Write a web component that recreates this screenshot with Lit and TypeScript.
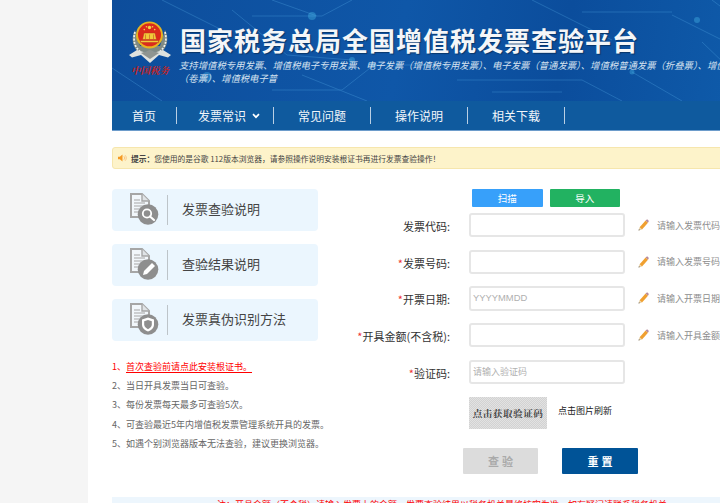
import { LitElement, html, css, svg } from "lit";
import { customElement } from "lit/decorators.js";

const docIcon = (glyph: unknown) => html`<svg class="doc" width="32" height="32" viewBox="0 0 32 32">
  <path d="M2 1H13L20 8V24H2Z" fill="#f2f7fb" stroke="#a6a6a6" stroke-width="2"/>
  <path d="M13 1V8H20" fill="#dfe3e6" stroke="#a6a6a6" stroke-width="1.4"/>
  <path d="M5 7H11M5 10H16M5 13H15M5 16H11M5 19H10" stroke="#a6a6a6" stroke-width="1.1"/>
  <circle cx="19" cy="21.5" r="10.3" fill="#8e8e8e"/>
  ${glyph}
</svg>`;

const searchG = svg`<circle cx="18" cy="20.5" r="4.2" fill="none" stroke="#fff" stroke-width="1.8"/><path d="M21 23.5L25 27" stroke="#fff" stroke-width="2.2" stroke-linecap="round"/>`;
const penG = svg`<path d="M14 27L15 23L23 15L26 18L18 26Z" fill="#fff"/>`;
const shieldG = svg`<path d="M19 14.5L25 16.5V21.5C25 25 22 27.5 19 28.5C16 27.5 13 25 13 21.5V16.5Z" fill="#fff"/><path d="M19 17L22.8 18.2V21.6C22.8 23.7 21 25.4 19 26.2C17 25.4 15.2 23.7 15.2 21.6V18.2Z" fill="#8e8e8e"/>`;

const pencil = html`<svg class="pencil" width="11" height="12" viewBox="0 0 11 12">
  <path d="M1.6 8.2L7.6 1.6L10 3.8L4 10.4Z" fill="#f0a030"/>
  <path d="M7.6 1.6L8.5.7C8.9.3 9.4.3 9.8.7L10.5 1.4C10.9 1.8 10.9 2.3 10.5 2.7L10 3.8Z" fill="#b98a9a"/>
  <path d="M1.6 8.2L.6 11.4L4 10.4Z" fill="#e9cfa0"/>
  <path d="M.6 11.4L.9 10.2L1.9 11.1Z" fill="#444"/>
</svg>`;

const emblem = html`<svg class="emblem" width="42" height="43" viewBox="0 0 42 43">
  <path d="M6 10C2 17 3 27 10 33L21 31L32 33C39 27 40 17 36 10L31 26H11Z" fill="#7f8a84"/>
  <path d="M6 12C4 19 5 27 11 31M36 12C38 19 37 27 31 31" fill="none" stroke="#eef1ee" stroke-width="1.7" stroke-dasharray="2 1.3"/>
  <path d="M8 30L0 35L3 37.5L12 35L21 43L30 35L39 37.5L42 35L34 30L21 34Z" fill="#dfe2de"/>
  <path d="M12 33L21 39L30 33L21 30Z" fill="#8f9591"/>
  <circle cx="20.5" cy="15" r="13.5" fill="#e6b422"/>
  <circle cx="20.5" cy="14.8" r="11.5" fill="#db2a1c"/>
  <circle cx="20.5" cy="7.5" r="1.7" fill="#f5d442"/>
  <circle cx="15.3" cy="9.6" r=".8" fill="#f5d442"/><circle cx="17.5" cy="6.8" r=".8" fill="#f5d442"/>
  <circle cx="25.7" cy="9.6" r=".8" fill="#f5d442"/><circle cx="23.5" cy="6.8" r=".8" fill="#f5d442"/>
  <path d="M13.5 19.5L15 13H26L27.5 19.5ZM11.5 20.5H29.5V22.5H11.5ZM16.5 14.5V19M20.5 14.5V19M24.5 14.5V19" fill="#f0c93a" stroke="#b9281c" stroke-width=".45"/>
</svg>`;

const banner = svg`<svg class="circuit" width="640" height="101" viewBox="0 0 640 101" preserveAspectRatio="none">
  <g fill="none" stroke="#5db4ee" stroke-width="1" opacity=".28">
    <path d="M50 0L110 30M140 16H210L240 0M160 0L205 16M120 10L175 55L240 60"/>
    <path d="M0 68L50 101M190 75L255 101M160 90H230L262 65H340"/>
    <path d="M345 80H470L510 101M380 92H450M520 72L570 101M590 42L640 90M560 15L640 55M600 0L640 30"/>
    <path d="M420 0L500 40M470 12H560"/>
  </g>
  <g fill="#4fc3f0" opacity=".35">
    <circle cx="200" cy="16" r="4"/><circle cx="240" cy="60" r="3"/><circle cx="262" cy="65" r="2.5"/>
    <circle cx="95" cy="77" r="5"/><circle cx="585" cy="20" r="3"/><circle cx="520" cy="72" r="2.5"/>
  </g>
</svg>`;

@customElement("app-root")
export class AppRoot extends LitElement {
  static styles = css`
    :host { display: block; width: 720px; height: 503px; overflow: hidden; background: #f5f5f5;
      font-family: "Liberation Sans", "Noto Sans CJK SC", sans-serif; }
    .page { margin-left: 88px; width: 632px; height: 503px; background: #fff; padding-left: 24px;
      box-sizing: border-box; overflow: hidden; }
    .content { width: 640px; }
    header { height: 130px; background: #0f5a9e; border-bottom: 1px solid #6d9ccb; }
    .banner { position: relative; height: 101px; display: flex; padding: 20px 0 0 17px; box-sizing: border-box;
      background: linear-gradient(100deg, #0d4d9b 0%, #0f57a8 45%, #0b4d9c 70%, #0f5cab 100%); overflow: hidden; }
    .circuit { position: absolute; left: 0; top: 0; }
    .logo { position: relative; display: flex; flex-direction: column; align-items: center; width: 42px; flex: none; }
    .emblem { display: block; }
    .seal { margin-top: 1px; font-size: 9.5px; line-height: 13px; font-weight: 700; font-style: italic;
      color: #c5231d; white-space: nowrap; font-family: "Noto Serif CJK SC", "Noto Sans CJK SC", serif; }
    .titles { position: relative; margin-left: 9px; padding-top: 3px; width: 590px; flex: none; }
    h1 { margin: 0; font-size: 26px; line-height: 33px; letter-spacing: 1px; font-weight: 700; color: #f4f6f8;
      white-space: nowrap; text-shadow: 1px 1px 1px rgba(0,0,0,.35); font-family: "Noto Sans CJK SC", sans-serif; }
    .sub { margin: 0 0 0 -1px; padding-top: 3px; font-size: 9.35px; line-height: 12.5px; font-style: italic; color: #d5e2f0;
      white-space: nowrap; font-family: "Noto Sans CJK SC", sans-serif; }
    nav { display: flex; height: 29px; align-items: center; background: #0f5a9e; color: #f2f6fa;
      font-size: 12px; font-family: "Noto Sans CJK SC", sans-serif; }
    nav a { flex: none; width: 97px; height: 17px; line-height: 17px; border-right: 1px solid #b9cfe4;
      box-sizing: border-box; display: flex; align-items: center; justify-content: center; gap: 6px; }
    nav a:first-child { width: 65px; }
    nav a.drop { padding-left: 8px; }
    .chev { display: block; }
    .notice { margin-top: 16px; height: 22px; display: flex; align-items: center; gap: 4px; padding-left: 5px;
      background: #fdf3ca; border: 1px solid #f6e6ad; border-radius: 3px; font-size: 7.75px; color: #444;
      box-sizing: border-box; white-space: nowrap; font-family: "Noto Sans CJK SC", sans-serif; }
    .notice b { font-weight: 700; }
    .body { display: flex; margin-top: 20px; }
    .left { width: 220px; flex: none; }
    .cards { display: flex; flex-direction: column; gap: 13px; width: 206px; }
    .card { height: 42px; display: flex; align-items: center; background: #ebf6fe; border-radius: 4px;
      padding-left: 17px; box-sizing: border-box; color: #444; font-size: 13px;
      font-family: "Noto Sans CJK SC", sans-serif; }
    .card span.t { margin-top: -3px; }
    .doc { flex: none; margin-top: -2px; }
    .divider { width: 1px; height: 30px; background: #bdc4c9; margin: 0 14px 0 6px; }
    ol { list-style: none; margin: 15.5px 0 0; padding: 0; font-size: 9px; line-height: 19.4px; color: #666;
      white-space: nowrap; font-family: "Noto Sans CJK SC", sans-serif; }
    .warn { color: #f00; }
    .warn u { text-decoration: underline; text-underline-offset: 2px; }
    .right { width: 408px; flex: none; }
    .tools { display: flex; gap: 7px; margin-left: 140px; margin-bottom: 6px; }
    .tool { width: 70.5px; height: 18px; line-height: 18px; text-align: center; color: #fff; font-size: 9.5px;
      border-radius: 1px; font-family: "Noto Sans CJK SC", sans-serif; }
    .blue { background: #37a0fa; }
    .green { background: #22b261; }
    .form { display: flex; flex-direction: column; gap: 12.5px; }
    .row { display: grid; grid-template-columns: 118px 156px auto; column-gap: 0; align-items: center; height: 24.2px; }
    .label { justify-self: end; margin-top: 2px; font-size: 11px; line-height: 16px; color: #333; white-space: nowrap; font-family: "Noto Sans CJK SC", sans-serif; }
    .label i { color: #e33; font-style: normal; }
    .input { grid-column: 2; margin-left: 19px; width: 156px; height: 24.2px; box-sizing: border-box; border: 2px solid #e6e6e6; border-radius: 3px;
      padding-left: 2px; line-height: 20px; font-size: 9px; color: #b0b0b0; white-space: nowrap;
      font-family: "Noto Sans CJK SC", sans-serif; background: #fff; }
    .input.date { font-family: "Liberation Sans", sans-serif; font-size: 9.4px; }
    .pencil { flex: none; }
    .hint { margin-left: 8px; font-size: 9px; color: #8d8d8d; white-space: nowrap; font-family: "Noto Sans CJK SC", sans-serif; }
    .hint-wrap { display: flex; align-items: center; margin-left: 32px; }
    .captcha { display: flex; align-items: center; margin: 13px 0 0 137px; gap: 11px; }
    .code { width: 78px; height: 32px; line-height: 32px; text-align: center; letter-spacing: .5px;
      background-color: #dcdcdc;
      background-image: repeating-conic-gradient(#d2d2d2 0 25%, #e2e2e2 0 50%);
      background-size: 2px 2px;
      font-family: "Noto Serif CJK SC", "Noto Sans CJK SC", serif; font-weight: 700; font-size: 9.6px; color: #444; white-space: nowrap; }
    .refresh { font-size: 9px; color: #222; font-family: "Noto Sans CJK SC", sans-serif; margin-top: -4px; }
    .actions { display: flex; gap: 24px; margin: 19px 0 0 131px; }
    .btn { width: 75px; height: 26px; line-height: 26px; text-align: center; text-indent: 3px; font-size: 11px; font-weight: 700;
      letter-spacing: 3px; border-radius: 1px; font-family: "Noto Sans CJK SC", sans-serif; }
    .btn.navy { width: 76px; }
    .gray { background: #dcdcdc; color: #aaa; }
    .navy { background: #005397; color: #fff; }
    .foot { margin-top: 23px; height: 10px; padding: 3px 0 0 105px; box-sizing: border-box; background: #edf6fd; color: #f00; font-size: 9px; line-height: 10px;
      white-space: nowrap; overflow: hidden; font-family: "Noto Sans CJK SC", sans-serif; }
  `;

  render() {
    const rows = [
      { l: "发票代码", req: false, hint: "请输入发票代码", ph: "" },
      { l: "发票号码", req: true, hint: "请输入发票号码", ph: "" },
      { l: "开票日期", req: true, hint: "请输入开票日期", ph: "YYYYMMDD" },
      { l: "开具金额(不含税)", req: true, hint: "请输入开具金额", ph: "" },
    ];
    return html`<div class="page"><div class="content">
      <header>
        <div class="banner">
          ${banner}
          <div class="logo">${emblem}<div class="seal">中国税务</div></div>
          <div class="titles">
            <h1>国家税务总局全国增值税发票查验平台</h1>
            <p class="sub">支持增值税专用发票、增值税电子专用发票、电子发票（增值税专用发票）、电子发票（普通发票）、增值税普通发票（折叠票）、增值税普通发票<br />（卷票）、增值税电子普</p>
          </div>
        </div>
        <nav>
          <a>首页</a>
          <a class="drop">发票常识<svg class="chev" width="8" height="6" viewBox="0 0 8 6"><path d="M1 1.2L4 4.2L7 1.2" fill="none" stroke="#fff" stroke-width="1.7"/></svg></a>
          <a>常见问题</a><a>操作说明</a><a>相关下载</a>
        </nav>
      </header>
      <div class="notice">
        <svg width="9" height="10" viewBox="0 0 10 10"><path d="M0 3.5H2L5 1V9L2 6.5H0Z" fill="#f59a23"/><path d="M6.5 3C7.5 4 7.5 6 6.5 7M8 2C9.5 3.5 9.5 6.5 8 8" fill="none" stroke="#f8bf7a" stroke-width="1"/></svg>
        <span><b>提示：</b>您使用的是谷歌 112版本浏览器，请参照操作说明安装根证书再进行发票查验操作！</span>
      </div>
      <div class="body">
        <div class="left">
          <div class="cards">
            <div class="card">${docIcon(searchG)}<span class="divider"></span><span class="t">发票查验说明</span></div>
            <div class="card">${docIcon(penG)}<span class="divider"></span><span class="t">查验结果说明</span></div>
            <div class="card">${docIcon(shieldG)}<span class="divider"></span><span class="t">发票真伪识别方法</span></div>
          </div>
          <ol>
            <li class="warn">1、<u>首次查验前请点此安装根证书。</u></li>
            <li>2、当日开具发票当日可查验。</li>
            <li>3、每份发票每天最多可查验5次。</li>
            <li>4、可查验最近5年内增值税发票管理系统开具的发票。</li>
            <li>5、如遇个别浏览器版本无法查验，建议更换浏览器。</li>
          </ol>
        </div>
        <div class="right">
          <div class="tools"><div class="tool blue">扫描</div><div class="tool green">导入</div></div>
          <div class="form">
            ${rows.map((r) => html`<div class="row">
              <div class="label">${r.req ? html`<i>*</i>` : ""}${r.l}:</div>
              <div class="input ${r.ph ? "date" : ""}">${r.ph}</div>
              <div class="hint-wrap">${pencil}<span class="hint">${r.hint}</span></div>
            </div>`)}
            <div class="row">
              <div class="label"><i>*</i>验证码:</div>
              <div class="input">请输入验证码</div>
            </div>
          </div>
          <div class="captcha"><div class="code">点击获取验证码</div><div class="refresh">点击图片刷新</div></div>
          <div class="actions"><div class="btn gray">查验</div><div class="btn navy">重置</div></div>
        </div>
      </div>
      <div class="foot">注：开具金额（不含税）请输入发票上的金额，发票查验结果以税务机关最终核实为准，如有疑问请联系税务机关。</div>
    </div></div>`;
  }
}
